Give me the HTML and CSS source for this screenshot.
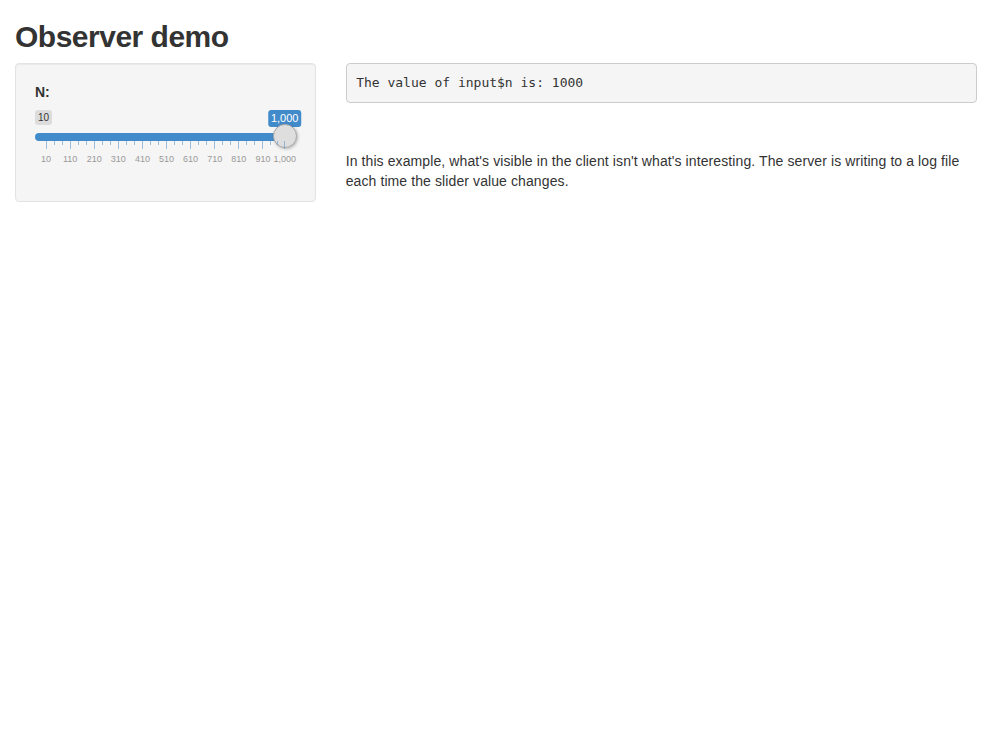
FILE: index.html
```html
<!DOCTYPE html>
<html>
<head>
<meta charset="utf-8">
<title>Observer demo</title>
<link rel="stylesheet" href="styles.css">
</head>
<body>
<div class="container">
  <h2 class="title">Observer demo</h2>
  <div class="row">
    <div class="col-side">
      <div class="well">
        <div class="form-group">
          <label class="control-label">N:</label>
          <div class="irs">
            <span class="irs-min">10</span>
            <span class="irs-single">1,000</span>
            <span class="irs-line"></span>
            <span class="irs-handle"></span>
            <div class="irs-grid">
              <span class="pol big" style="left:0%"></span>
              <span class="pol" style="left:3.367%"></span>
              <span class="pol" style="left:6.734%"></span>
              <span class="pol big" style="left:10.101%"></span>
              <span class="pol" style="left:13.468%"></span>
              <span class="pol" style="left:16.835%"></span>
              <span class="pol big" style="left:20.202%"></span>
              <span class="pol" style="left:23.569%"></span>
              <span class="pol" style="left:26.936%"></span>
              <span class="pol big" style="left:30.303%"></span>
              <span class="pol" style="left:33.670%"></span>
              <span class="pol" style="left:37.037%"></span>
              <span class="pol big" style="left:40.404%"></span>
              <span class="pol" style="left:43.771%"></span>
              <span class="pol" style="left:47.138%"></span>
              <span class="pol big" style="left:50.505%"></span>
              <span class="pol" style="left:53.872%"></span>
              <span class="pol" style="left:57.239%"></span>
              <span class="pol big" style="left:60.606%"></span>
              <span class="pol" style="left:63.973%"></span>
              <span class="pol" style="left:67.340%"></span>
              <span class="pol big" style="left:70.707%"></span>
              <span class="pol" style="left:74.074%"></span>
              <span class="pol" style="left:77.441%"></span>
              <span class="pol big" style="left:80.808%"></span>
              <span class="pol" style="left:84.175%"></span>
              <span class="pol" style="left:87.542%"></span>
              <span class="pol big" style="left:90.909%"></span>
              <span class="pol" style="left:93.939%"></span>
              <span class="pol" style="left:96.970%"></span>
              <span class="pol big" style="left:100%"></span>
              <span class="grid-text" style="left:0%">10</span>
              <span class="grid-text" style="left:10.101%">110</span>
              <span class="grid-text" style="left:20.202%">210</span>
              <span class="grid-text" style="left:30.303%">310</span>
              <span class="grid-text" style="left:40.404%">410</span>
              <span class="grid-text" style="left:50.505%">510</span>
              <span class="grid-text" style="left:60.606%">610</span>
              <span class="grid-text" style="left:70.707%">710</span>
              <span class="grid-text" style="left:80.808%">810</span>
              <span class="grid-text" style="left:90.909%">910</span>
              <span class="grid-text" style="left:100%">1,000</span>
            </div>
          </div>
        </div>
      </div>
    </div>
    <div class="col-main">
      <pre class="output">The value of input$n is: 1000</pre>
      <p class="desc">In this example, what's visible in the client isn't what's interesting. The server is writing to a log file each time the slider value changes.</p>
    </div>
  </div>
</div>
</body>
</html>
```
FILE: styles.css
```css
* { box-sizing: border-box; }
html, body { margin: 0; padding: 0; background: #fff; }
body {
  font-family: "Liberation Sans", Arial, sans-serif;
  font-size: 14px;
  line-height: 1.42857;
  color: #333;
}
.container { padding: 0 15px; }
.title {
  font-size: 30px;
  font-weight: 700;
  letter-spacing: -0.5px;
  line-height: 1.1;
  margin: 20px 0 10px;
  color: #333;
}
.row { display: flex; margin: 0 -15px; }
.col-side { width: 33.3333%; padding: 0 15px; }
.col-main { width: 66.6667%; padding: 0 15px; }
.well {
  min-height: 20px;
  padding: 19px;
  margin-bottom: 20px;
  background: #f5f5f5;
  border: 1px solid #e3e3e3;
  border-radius: 4px;
  box-shadow: inset 0 1px 1px rgba(0,0,0,.05);
}
.form-group { margin-bottom: 15px; }
.control-label {
  display: inline-block;
  font-weight: 700;
  margin-bottom: 5px;
}
.irs { position: relative; height: 59px; }
.irs-min, .irs-single {
  position: absolute;
  top: 2px;
  font-size: 10px;
  line-height: 1.333;
  padding: 1px 3px;
  border-radius: 3px;
}
.irs-min { left: 0; background: rgba(0,0,0,0.1); color: #333; }
.irs-single {
  left: calc(100% - 11px);
  transform: translateX(-50%);
  background: #428bca;
  color: #fff;
  font-size: 11px;
  padding: 1px 3px;
  white-space: nowrap;
}
.irs-line {
  position: absolute;
  top: 25px;
  left: 0;
  right: 0;
  height: 8px;
  border-radius: 8px;
  background: #428bca;
}
.irs-handle {
  position: absolute;
  top: 16px;
  right: -1px;
  width: 24px;
  height: 24px;
  border: 1px solid #aaa;
  border-radius: 50%;
  background: #dedede;
  box-shadow: 1px 1px 3px rgba(0,0,0,0.25);
}
.irs-grid {
  position: absolute;
  top: 33px;
  left: 11px;
  right: 11px;
  height: 26px;
}
.pol {
  position: absolute;
  top: 0;
  width: 1px;
  height: 4px;
  margin-left: -0.5px;
  background: rgba(66,139,202,0.5);
}
.pol.big { height: 8px; }
.grid-text {
  position: absolute;
  top: 12px;
  transform: translateX(-50%);
  font-size: 9px;
  line-height: 1.4;
  color: #999;
  white-space: nowrap;
}
.output {
  margin: 0 0 10px;
  padding: 9.5px;
  font-family: "DejaVu Sans Mono", Menlo, monospace;
  font-size: 13px;
  line-height: 1.42857;
  color: #333;
  background: #f5f5f5;
  border: 1px solid #ccc;
  border-radius: 4px;
  white-space: pre-wrap;
}
.desc { margin: 49px 0 10px; letter-spacing: 0.1px; }
```
